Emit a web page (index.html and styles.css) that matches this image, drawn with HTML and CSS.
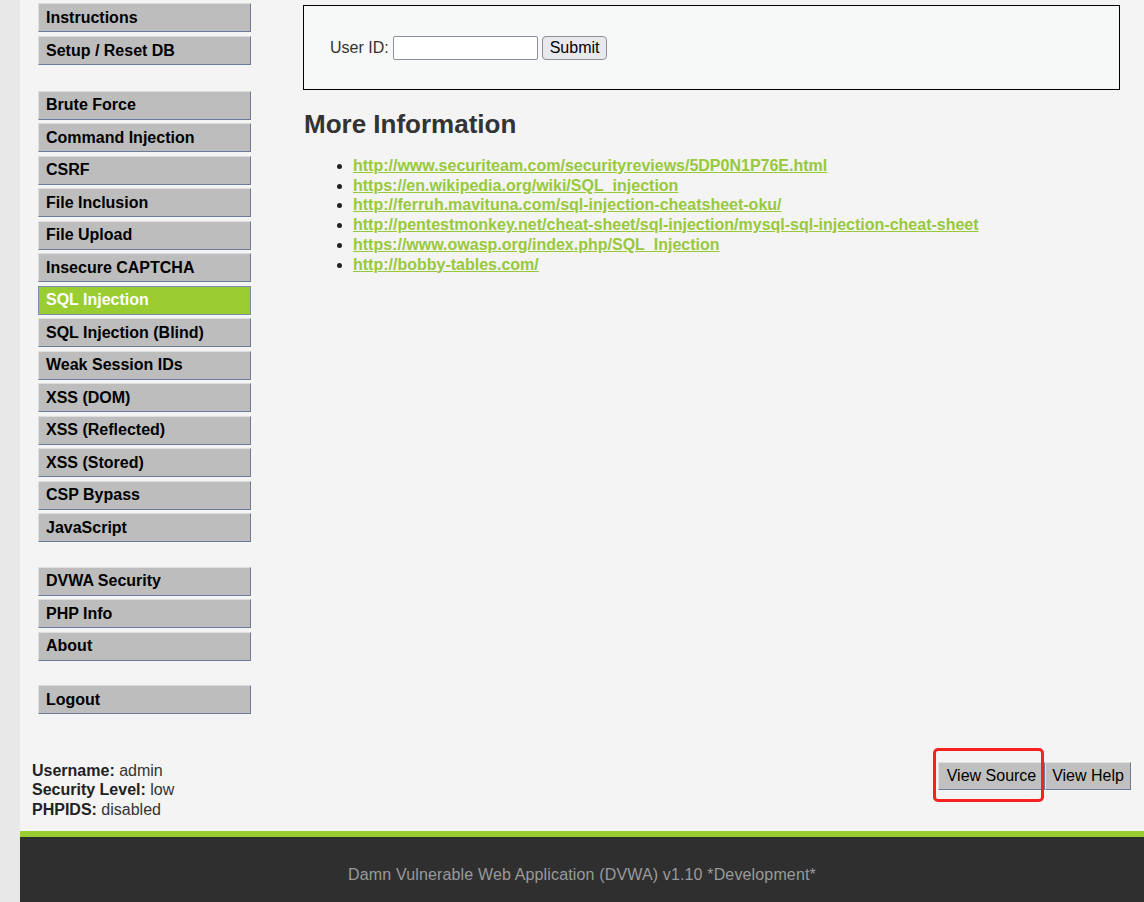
FILE: index.html
```html
<!DOCTYPE html>
<html>
<head>
<meta charset="utf-8">
<title>DVWA - SQL Injection</title>
<link rel="stylesheet" href="styles.css">
</head>
<body>
<div class="page">
  <div class="layout">
    <aside class="menu">
      <ul class="menu-group first">
        <li><a class="menu-item" href="#">Instructions</a></li>
        <li><a class="menu-item" href="#">Setup / Reset DB</a></li>
      </ul>
      <ul class="menu-group">
        <li><a class="menu-item" href="#">Brute Force</a></li>
        <li><a class="menu-item" href="#">Command Injection</a></li>
        <li><a class="menu-item" href="#">CSRF</a></li>
        <li><a class="menu-item" href="#">File Inclusion</a></li>
        <li><a class="menu-item" href="#">File Upload</a></li>
        <li><a class="menu-item" href="#">Insecure CAPTCHA</a></li>
        <li><a class="menu-item selected" href="#">SQL Injection</a></li>
        <li><a class="menu-item" href="#">SQL Injection (Blind)</a></li>
        <li><a class="menu-item" href="#">Weak Session IDs</a></li>
        <li><a class="menu-item" href="#">XSS (DOM)</a></li>
        <li><a class="menu-item" href="#">XSS (Reflected)</a></li>
        <li><a class="menu-item" href="#">XSS (Stored)</a></li>
        <li><a class="menu-item" href="#">CSP Bypass</a></li>
        <li><a class="menu-item" href="#">JavaScript</a></li>
      </ul>
      <ul class="menu-group">
        <li><a class="menu-item" href="#">DVWA Security</a></li>
        <li><a class="menu-item" href="#">PHP Info</a></li>
        <li><a class="menu-item" href="#">About</a></li>
      </ul>
      <ul class="menu-group last">
        <li><a class="menu-item" href="#">Logout</a></li>
      </ul>
    </aside>
    <main class="content">
      <div class="vulnerable-code">
        <form class="id-form">
          <label class="id-label">User ID:</label>
          <input class="id-input" type="text">
          <button class="submit-btn" type="button">Submit</button>
        </form>
      </div>
      <h2 class="more-title">More Information</h2>
      <ul class="links">
        <li><a href="#">http://www.securiteam.com/securityreviews/5DP0N1P76E.html</a></li>
        <li><a href="#">https://en.wikipedia.org/wiki/SQL_injection</a></li>
        <li><a href="#">http://ferruh.mavituna.com/sql-injection-cheatsheet-oku/</a></li>
        <li><a href="#">http://pentestmonkey.net/cheat-sheet/sql-injection/mysql-sql-injection-cheat-sheet</a></li>
        <li><a href="#">https://www.owasp.org/index.php/SQL_Injection</a></li>
        <li><a href="#">http://bobby-tables.com/</a></li>
      </ul>
    </main>
  </div>
  <div class="status-row">
    <div class="status">
      <div><b>Username:</b> admin</div>
      <div><b>Security Level:</b> low</div>
      <div><b>PHPIDS:</b> disabled</div>
    </div>
    <div class="actions">
      <span class="highlight-wrap">
        <button class="popup-btn source-btn" type="button">View Source</button>
        <span class="highlight"></span>
      </span>
      <button class="popup-btn help-btn" type="button">View Help</button>
    </div>
  </div>
  <footer class="footer">
    <p>Damn Vulnerable Web Application (DVWA) v1.10 *Development*</p>
  </footer>
</div>
</body>
</html>
```

FILE: styles.css
```css
html, body {
  margin: 0;
  padding: 0;
}

body {
  background: #e8e8e8;
  font-family: Arial, "Liberation Sans", sans-serif;
  font-size: 16px;
  color: #222;
  overflow: hidden;
}

.page {
  margin-left: 20px;
  background: #f4f4f4;
}

.layout {
  display: flex;
  align-items: flex-start;
}

.menu {
  width: 213px;
  padding: 3px 0 0 18px;
  flex: none;
}

.menu-group {
  list-style: none;
  margin: 0 0 24.5px 0;
  padding: 0;
}

.menu-group.first {
  margin-bottom: 25.5px;
}

.menu-group.first li {
  margin-bottom: 4px;
}

.menu-group.last {
  margin-bottom: 0;
}

.menu-group li {
  margin-bottom: 3.5px;
}

.menu-item {
  display: flex;
  align-items: center;
  box-sizing: border-box;
  height: 29px;
  padding: 0 0 0 7px;
  background: #bdbdbd;
  border-top: 1px solid #dedede;
  border-left: 1px solid #dedede;
  border-right: 1px solid #6b7b9a;
  border-bottom: 1px solid #6b7b9a;
  color: #000;
  font-weight: bold;
  text-decoration: none;
}

.menu-item.selected {
  background: #9acd32;
  color: #fff;
  border-top-color: #7a8ab0;
  border-left-color: #7a8ab0;
  border-right-color: #7a8ab0;
  border-bottom-color: #7a8ab0;
}

.content {
  flex: 1;
  margin-left: 52px;
  margin-right: 24px;
  padding-top: 5px;
}

.vulnerable-code {
  box-sizing: border-box;
  height: 85px;
  border: 1px solid #000;
  background: #f7f8f8;
  display: flex;
  align-items: center;
  padding-left: 26px;
}

.id-form {
  display: flex;
  align-items: center;
  margin: 0;
}

.id-label {
  color: #333;
  margin-right: 4px;
}

.id-input {
  box-sizing: border-box;
  width: 145px;
  height: 24px;
  border: 1px solid #8f8f9d;
  border-radius: 2px;
  background: #fff;
  padding: 1px 2px;
  font-family: Arial, "Liberation Sans", sans-serif;
  font-size: 16px;
  margin: 0 4px 0 0;
}

.submit-btn {
  box-sizing: border-box;
  height: 24px;
  padding: 0 7px;
  border: 1px solid #8f8f9d;
  border-radius: 4px;
  background: #e9e9ed;
  font-family: Arial, "Liberation Sans", sans-serif;
  font-size: 16px;
  color: #000;
}

.more-title {
  margin: 19px 0 0 1px;
  font-size: 26px;
  font-weight: bold;
  color: #333;
  line-height: 30px;
}

.links {
  margin: 17px 0 0 0;
  padding-left: 50px;
  list-style: disc;
  color: #222;
}

.links li {
  line-height: 19.7px;
}

.links a {
  color: #98c93c;
  font-weight: bold;
  text-decoration: underline;
}

.status-row {
  display: flex;
  justify-content: space-between;
  align-items: flex-start;
  padding: 0 13px 12px 12px;
  margin-top: 43px;
}

.status {
  color: #333;
  line-height: 19.5px;
}

.status b {
  color: #222;
}

.actions {
  display: flex;
  margin-top: 1px;
}

.highlight-wrap {
  position: relative;
  display: flex;
}

.popup-btn {
  box-sizing: border-box;
  height: 28px;
  padding: 0;
  text-align: center;
  background: #c0c0c0;
  border-top: 1px solid #e0e0e0;
  border-left: 1px solid #e0e0e0;
  border-right: 1px solid #6b7b9a;
  border-bottom: 1px solid #6b7b9a;
  font-family: Arial, "Liberation Sans", sans-serif;
  font-size: 16px;
  color: #000;
}

.source-btn {
  width: 107px;
}

.help-btn {
  width: 86px;
}

.highlight {
  position: absolute;
  left: -5px;
  top: -14px;
  width: 111px;
  height: 54px;
  box-sizing: border-box;
  border: 3px solid #f52222;
  border-radius: 5px;
  pointer-events: none;
}

.footer {
  border-top: 6px solid #9acd32;
  background: #2f2f2f;
  height: 90px;
  display: flex;
  justify-content: center;
}

.footer p {
  margin: 29px 0 0 0;
  color: #9a9a9a;
  line-height: 18px;
  letter-spacing: 0.15px;
}
```
